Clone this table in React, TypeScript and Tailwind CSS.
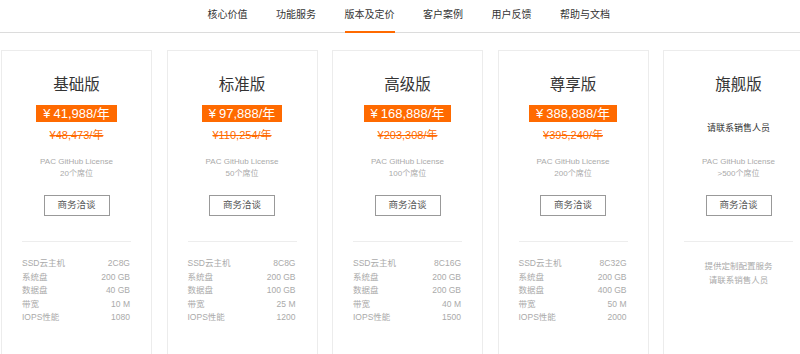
import React from "react";

const FONT = '"Liberation Sans", "Noto Sans CJK SC", sans-serif';

type Plan = {
  name: string;
  price?: string;
  old?: string;
  seats: string;
  specs?: [string, string][];
};

const plans: Plan[] = [
  {
    name: "基础版",
    price: "41,988/年",
    old: "¥48,473/年",
    seats: "20个席位",
    specs: [
      ["SSD云主机", "2C8G"],
      ["系统盘", "200 GB"],
      ["数据盘", "40 GB"],
      ["带宽", "10 M"],
      ["IOPS性能", "1080"],
    ],
  },
  {
    name: "标准版",
    price: "97,888/年",
    old: "¥110,254/年",
    seats: "50个席位",
    specs: [
      ["SSD云主机", "8C8G"],
      ["系统盘", "200 GB"],
      ["数据盘", "100 GB"],
      ["带宽", "25 M"],
      ["IOPS性能", "1200"],
    ],
  },
  {
    name: "高级版",
    price: "168,888/年",
    old: "¥203,308/年",
    seats: "100个席位",
    specs: [
      ["SSD云主机", "8C16G"],
      ["系统盘", "200 GB"],
      ["数据盘", "200 GB"],
      ["带宽", "40 M"],
      ["IOPS性能", "1500"],
    ],
  },
  {
    name: "尊享版",
    price: "388,888/年",
    old: "¥395,240/年",
    seats: "200个席位",
    specs: [
      ["SSD云主机", "8C32G"],
      ["系统盘", "200 GB"],
      ["数据盘", "400 GB"],
      ["带宽", "50 M"],
      ["IOPS性能", "2000"],
    ],
  },
  {
    name: "旗舰版",
    seats: ">500个席位",
  },
];

const navItems = ["核心价值", "功能服务", "版本及定价", "客户案例", "用户反馈", "帮助与文档"];

function Card({ plan }: { plan: Plan }) {
  return (
    <div className="w-[151px] shrink-0 h-[330px] border border-[#ececec] bg-white flex flex-col items-center pt-[24px]">
      <div className="text-[15.5px] leading-[20px] text-[#333]">{plan.name}</div>
      {plan.price ? (
        <>
          <div className="mt-[10px] h-[17px] bg-[#ff6a00] text-white text-[13px] leading-[17px] px-[7px] flex items-center">
            <span>¥</span>
            <span className="ml-[3px]">{plan.price}</span>
          </div>
          <div className="mt-[6px] text-[11px] leading-[14px] text-[#ff6a00] line-through">{plan.old}</div>
        </>
      ) : (
        <div className="h-[47px] pt-[26px] text-[9px] leading-[14px] text-[#333]">请联系销售人员</div>
      )}
      <div className="mt-[14px] text-[8px] leading-[12px] text-[#aaa] text-center">
        <div>PAC GitHub License</div>
        <div>{plan.seats}</div>
      </div>
      <div className="mt-[15px] w-[66px] h-[21px] border border-[#999] flex items-center justify-center text-[9.5px] text-[#555]">
        商务洽谈
      </div>
      <div className="mt-[25px] w-full px-[20px]">
        <div className="border-t border-[#ededed]" />
        {plan.specs ? (
          <div className="mt-[15px] flex flex-col text-[8.5px] leading-[13.5px] text-[#aaa]">
            {plan.specs.map(([k, v]) => (
              <div key={k} className="flex justify-between pr-[1px]">
                <span>{k}</span>
                <span>{v}</span>
              </div>
            ))}
          </div>
        ) : (
          <div className="mt-[17px] flex flex-col items-center text-[8.5px] leading-[14px] text-[#aaa]">
            <div>提供定制配置服务</div>
            <div>请联系销售人员</div>
          </div>
        )}
      </div>
    </div>
  );
}

export default function App() {
  return (
    <div className="w-[800px] h-[354px] overflow-hidden bg-white" style={{ fontFamily: FONT }}>
      <div className="h-[33px] border-b border-[#dcdcdc] flex pl-[207.5px] gap-[28.5px]">
        {navItems.map((item) => (
          <div key={item} className="relative h-full flex items-center pb-[3px] text-[10px] text-[#333]">
            {item}
            {item === "版本及定价" && (
              <div className="absolute left-0 right-0 bottom-[-1px] h-[2px] bg-[#ff6a00]" />
            )}
          </div>
        ))}
      </div>
      <div className="mt-[17px] flex pl-[1px] gap-[14.5px]">
        {plans.map((p) => (
          <Card key={p.name} plan={p} />
        ))}
      </div>
    </div>
  );
}
